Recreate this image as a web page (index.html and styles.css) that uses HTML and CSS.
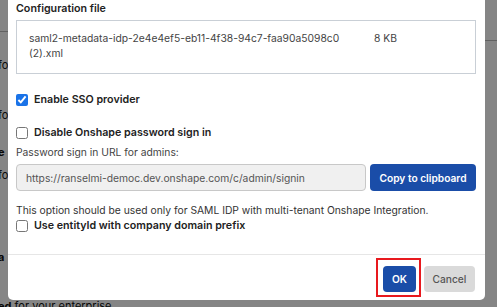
FILE: index.html
```html
<!DOCTYPE html>
<html>
<head>
<meta charset="utf-8">
<link rel="stylesheet" href="styles.css">
</head>
<body>
<div class="page">
  <div class="bg-rule bg-rule-left"></div>
  <div class="bg-rule bg-rule-right"></div>
  <div class="bg-text">
    <p class="bg-line l1">for</p>
    <p class="bg-line l2">for</p>
    <p class="bg-line l3 strong">e</p>
    <p class="bg-line l4">for</p>
    <p class="bg-line l5 strong">a</p>
    <p class="bg-line l6"><b>ed</b> for your enterprise</p>
  </div>
</div>
<div class="overlay"></div>
<div class="modal">
  <div class="modal-body">
    <div class="label">Configuration file</div>
    <div class="file-box">
      <div class="file-name">saml2-metadata-idp-2e4e4ef5-eb11-4f38-94c7-faa90a5098c0<br>(2).xml</div>
      <div class="file-size">8 KB</div>
    </div>
    <label class="check check-sso"><input type="checkbox" checked><span>Enable SSO provider</span></label>
    <label class="check check-pwd"><input type="checkbox"><span>Disable Onshape password sign in</span></label>
    <div class="hint">Password sign in URL for admins:</div>
    <div class="url-row">
      <div class="url-input">https://ranselmi-democ.dev.onshape.com/c/admin/signin</div>
      <button class="btn btn-primary btn-copy">Copy to clipboard</button>
    </div>
    <div class="note">This option should be used only for SAML IDP with multi-tenant Onshape Integration.</div>
    <label class="check check-entity"><input type="checkbox"><span>Use entityId with company domain prefix</span></label>
  </div>
  <div class="modal-footer">
    <span class="highlight"><button class="btn btn-primary btn-ok">OK</button></span>
    <button class="btn btn-cancel">Cancel</button>
  </div>
</div>
</body>
</html>
```
FILE: styles.css
```css
html, body {
  margin: 0;
  padding: 0;
}
body {
  width: 497px;
  height: 307px;
  overflow: hidden;
  position: relative;
  font-family: Inter, "Noto Sans", sans-serif;
  font-size: 10.3px;
  color: #333;
  background: #fff;
}
.page {
  position: absolute;
  inset: 0;
}
.bg-rule {
  position: absolute;
  height: 1px;
  background: #bbb;
}
.bg-rule-left { left: 0; width: 20px; top: 31px; }
.bg-rule-right { right: 0; width: 20px; top: 40px; }
.bg-text {
  position: absolute;
  left: -4px;
  top: 0;
}
.bg-line {
  margin: 0;
  position: absolute;
  left: 0;
  white-space: nowrap;
  font-size: 11px;
  color: #111;
}
.bg-line.strong { font-weight: 700; left: 2px; }
.l1 { top: 58px; left: 2px; }
.l2 { top: 108px; left: 2px; }
.l3 { top: 145px; }
.l4 { top: 168px; left: 2px; }
.l5 { top: 250px; }
.l6 { top: 299px; left: 2px; }
.overlay {
  position: absolute;
  inset: 0;
  background: rgba(0, 0, 0, 0.48);
}
.modal {
  position: absolute;
  left: 8px;
  top: 0;
  width: 477px;
  height: 300px;
  background: #fff;
  border-radius: 0 0 5px 5px;
  display: flex;
  flex-direction: column;
  box-sizing: border-box;
}
.modal-body {
  height: 255px;
  box-sizing: border-box;
  padding: 1px 9px 0 8px;
  display: flex;
  flex-direction: column;
  border-bottom: 1px solid #e6e6e6;
}
.label {
  font-weight: 600;
  font-size: 10.7px;
  line-height: 16px;
  color: #222;
}
.file-box {
  margin-top: 3px;
  border: 1px solid #c9cfd6;
  height: 54px;
  box-sizing: border-box;
  padding: 10px 12px 0 12px;
  display: flex;
  color: #444;
  line-height: 15px;
}
.file-name { width: 345px; }
.check {
  display: flex;
  align-items: center;
  gap: 6px;
  font-weight: 600;
  font-size: 10.7px;
  color: #222;
  line-height: 16px;
}
.check input {
  margin: 0;
  width: 12px;
  height: 12px;
  accent-color: #1a73e8;
}
.check-sso { margin-top: 18px; }
.check-pwd { margin-top: 17px; }
.hint {
  margin-top: 3px;
  line-height: 16px;
  color: #444;
}
.url-row {
  margin-top: 4px;
  display: flex;
  gap: 4px;
  height: 27px;
}
.url-input {
  width: 350px;
  box-sizing: border-box;
  border: 1px solid #c8c8c8;
  border-radius: 4px;
  background: #f0f0f0;
  color: #555;
  padding: 0 9px;
  display: flex;
  align-items: center;
}
.btn {
  font-family: Inter, "Noto Sans", sans-serif;
  font-size: 10.2px;
  border: none;
  border-radius: 4px;
  padding: 0;
  height: 26px;
  cursor: pointer;
}
.btn-primary {
  background: #1a4da8;
  color: #fff;
  font-weight: 600;
}
.btn-copy {
  width: 106px;
  height: 27px;
}
.note {
  margin-top: 12px;
  line-height: 15px;
  color: #333;
}
.check-entity { margin-top: 0; }
.modal-footer {
  display: flex;
  justify-content: flex-end;
  align-items: flex-start;
  gap: 3px;
  padding: 3px 10px 0 0;
}
.highlight {
  display: inline-flex;
  border: 2px solid #e8191e;
  padding: 6px 3px 3px 5px;
}
.btn-ok { width: 33px; }
.btn-cancel {
  width: 51px;
  margin-top: 8px;
  background: #dadada;
  color: #555;
  font-weight: 500;
}
```
